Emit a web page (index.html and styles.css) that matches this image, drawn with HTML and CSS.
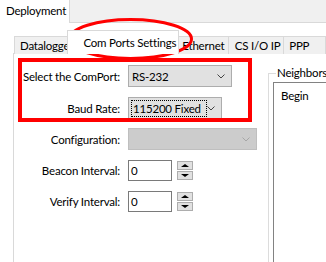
FILE: index.html
```html
<!DOCTYPE html>
<html lang="en">
<head>
  <meta charset="UTF-8" />
  <title>Deployment</title>
  <link rel="stylesheet" href="styles.css">
</head>
<body>
  <div class="window">
    <div class="top-tabs">
      <div class="top-tab">Deployment</div>
    </div>

    <div class="page">
      <div class="tabs">
        <div class="tab tab-datalogger">Datalogger</div>
        <div class="tab tab-active">Com Ports Settings</div>
        <div class="tab tab-ethernet">Ethernet</div>
        <div class="tab tab-csio">CS I/O IP</div>
        <div class="tab tab-ppp">PPP</div>
      </div>

      <div class="tab-page">
        <div class="form">
          <div class="row row-first">
            <label class="label">Select the ComPort:</label>
            <div class="combo combo-port">
              <span>RS-232</span>
              <svg class="chevron" width="8" height="5" viewBox="0 0 8 5"><path d="M0.5 0.5 L4 4 L7.5 0.5" fill="none" stroke="#444" stroke-width="1"/></svg>
            </div>
          </div>
          <div class="row row-baud">
            <label class="label">Baud Rate:</label>
            <div class="combo combo-baud">
              <span class="focus">115200 Fixed</span>
              <svg class="chevron" width="8" height="5" viewBox="0 0 8 5"><path d="M0.5 0.5 L4 4 L7.5 0.5" fill="none" stroke="#444" stroke-width="1"/></svg>
            </div>
          </div>
          <div class="row">
            <label class="label">Configuration:</label>
            <div class="combo combo-config disabled">
              <span></span>
              <svg class="chevron" width="8" height="5" viewBox="0 0 8 5"><path d="M0.5 0.5 L4 4 L7.5 0.5" fill="none" stroke="#a6a6a6" stroke-width="1"/></svg>
            </div>
          </div>
          <div class="row">
            <label class="label">Beacon Interval:</label>
            <div class="spin">
              <div class="number">0</div>
              <div class="spin-buttons">
                <div class="spin-btn"><span class="tri-up"></span></div>
                <div class="spin-btn"><span class="tri-down"></span></div>
              </div>
            </div>
          </div>
          <div class="row">
            <label class="label">Verify Interval:</label>
            <div class="spin">
              <div class="number">0</div>
              <div class="spin-buttons">
                <div class="spin-btn"><span class="tri-up"></span></div>
                <div class="spin-btn"><span class="tri-down"></span></div>
              </div>
            </div>
          </div>
        </div>

        <fieldset class="group">
          <legend>Neighbors</legend>
          <div class="list">Begin</div>
        </fieldset>
      </div>
    </div>
  </div>

  <!-- red annotations drawn over the dialog -->
  <svg class="mark-ellipse" width="326" height="70" viewBox="0 0 326 70">
    <ellipse cx="130.5" cy="39" rx="61" ry="19.5" fill="none" stroke="#ff0000" stroke-width="3"/>
  </svg>
  <div class="mark-box"></div>
</body>
</html>
```

FILE: styles.css
```css
body {
  margin: 0;
  width: 326px;
  height: 262px;
  overflow: hidden;
  position: relative;
  font-family: "Lato", "Liberation Sans", sans-serif;
  font-size: 11.5px;
  letter-spacing: -0.2px;
  color: #000;
  background: #ffffff;
}

.window {
  height: 262px;
  overflow: hidden;
}

.top-tabs {
  display: flex;
  align-items: flex-start;
  height: 22px;
  background: #f0f0f0;
  border-bottom: 1px solid #d9d9d9;
}

.top-tab {
  width: 70px;
  height: 23px;
  padding: 2px 0 0 6px;
  box-sizing: border-box;
  background: #ffffff;
  border-right: 1px solid #d9d9d9;
  line-height: 18px;
  white-space: nowrap;
}

.page {
  padding-top: 7px;
}

.tabs {
  display: flex;
  align-items: flex-end;
  height: 23px;
  margin-left: 13px;
  padding-left: 1px;
  border-bottom: 1px solid #d9d9d9;
}

.tab {
  height: 18px;
  margin-bottom: -1px;
  padding-top: 1px;
  box-sizing: border-box;
  background: #f0f0f0;
  border: 1px solid #d9d9d9;
  border-bottom: none;
  line-height: 16px;
  white-space: nowrap;
  overflow: hidden;
}

.tab + .tab {
  margin-left: -1px;
}

.tab-datalogger {
  width: 58px;
  padding-left: 5px;
}

.tab-active {
  position: relative;
  z-index: 1;
  width: 115px;
  height: 24px;
  margin-left: -3px !important;
  margin-right: -2px;
  padding-left: 15px;
  padding-top: 4px;
  background: #ffffff;
}

.tab-ethernet {
  width: 54px;
  padding-left: 5px;
}

.tab-csio {
  width: 58px;
  padding-left: 6px;
}

.tab-ppp {
  width: 44px;
  padding-left: 5px;
}

.tab-page {
  display: flex;
  height: 209px;
  margin-left: 13px;
  border-left: 1px solid #d9d9d9;
}

.form {
  width: 254px;
  flex-shrink: 0;
  padding-top: 11px;
  box-sizing: border-box;
}

.row {
  display: flex;
  align-items: center;
  height: 22px;
  margin-top: 9px;
}

.row-first {
  margin-top: 0;
}

.row-baud {
  margin-top: 10px;
}

.label {
  width: 106px;
  margin-right: 8px;
  text-align: right;
  white-space: nowrap;
}

.combo {
  display: flex;
  align-items: center;
  justify-content: space-between;
  height: 22px;
  box-sizing: border-box;
  padding: 0 6px 0 3px;
  background: #e1e1e1;
  border: 1px solid #adadad;
  white-space: nowrap;
}

.combo-port {
  width: 104px;
}

.combo-baud {
  width: 94px;
}

.combo-config {
  width: 129px;
}

.combo.disabled {
  background: #cccccc;
  border-color: #bfbfbf;
}

.focus {
  width: 72px;
  padding: 0 1px;
  line-height: 15px;
  outline: 1px dotted #000;
}

.chevron {
  display: block;
}

.spin {
  display: flex;
  align-items: center;
}

.number {
  width: 44px;
  height: 21px;
  box-sizing: border-box;
  padding-left: 2px;
  border: 1px solid #7a7a7a;
  line-height: 19px;
}

.spin-buttons {
  display: flex;
  flex-direction: column;
  gap: 1px;
  margin-left: 5px;
}

.spin-btn {
  display: flex;
  align-items: center;
  justify-content: center;
  width: 16px;
  height: 9px;
  box-sizing: border-box;
  background: #e1e1e1;
  border: 1px solid #adadad;
}

.tri-up {
  border-left: 4px solid transparent;
  border-right: 4px solid transparent;
  border-bottom: 3px solid #000;
}

.tri-down {
  border-left: 4px solid transparent;
  border-right: 4px solid transparent;
  border-top: 3px solid #000;
}

.group {
  flex: 1;
  min-width: 0;
  margin: 11px 0 0 0;
  padding: 1px 0 0 4px;
  border: 1px solid #dcdcdc;
  border-right: none;
  border-bottom: none;
  white-space: nowrap;
}

.group legend {
  margin-left: 3px;
  padding: 0 1px;
  line-height: 16px;
}

.list {
  height: 180px;
  padding: 6px 0 0 7px;
  border: 1px solid #828282;
  border-right: none;
  border-bottom: none;
}

.mark-ellipse {
  position: absolute;
  left: 0;
  top: 0;
}

.mark-box {
  position: absolute;
  left: 18px;
  top: 58px;
  width: 234px;
  height: 64px;
  box-sizing: border-box;
  border: 4px solid #ff0000;
}
```
